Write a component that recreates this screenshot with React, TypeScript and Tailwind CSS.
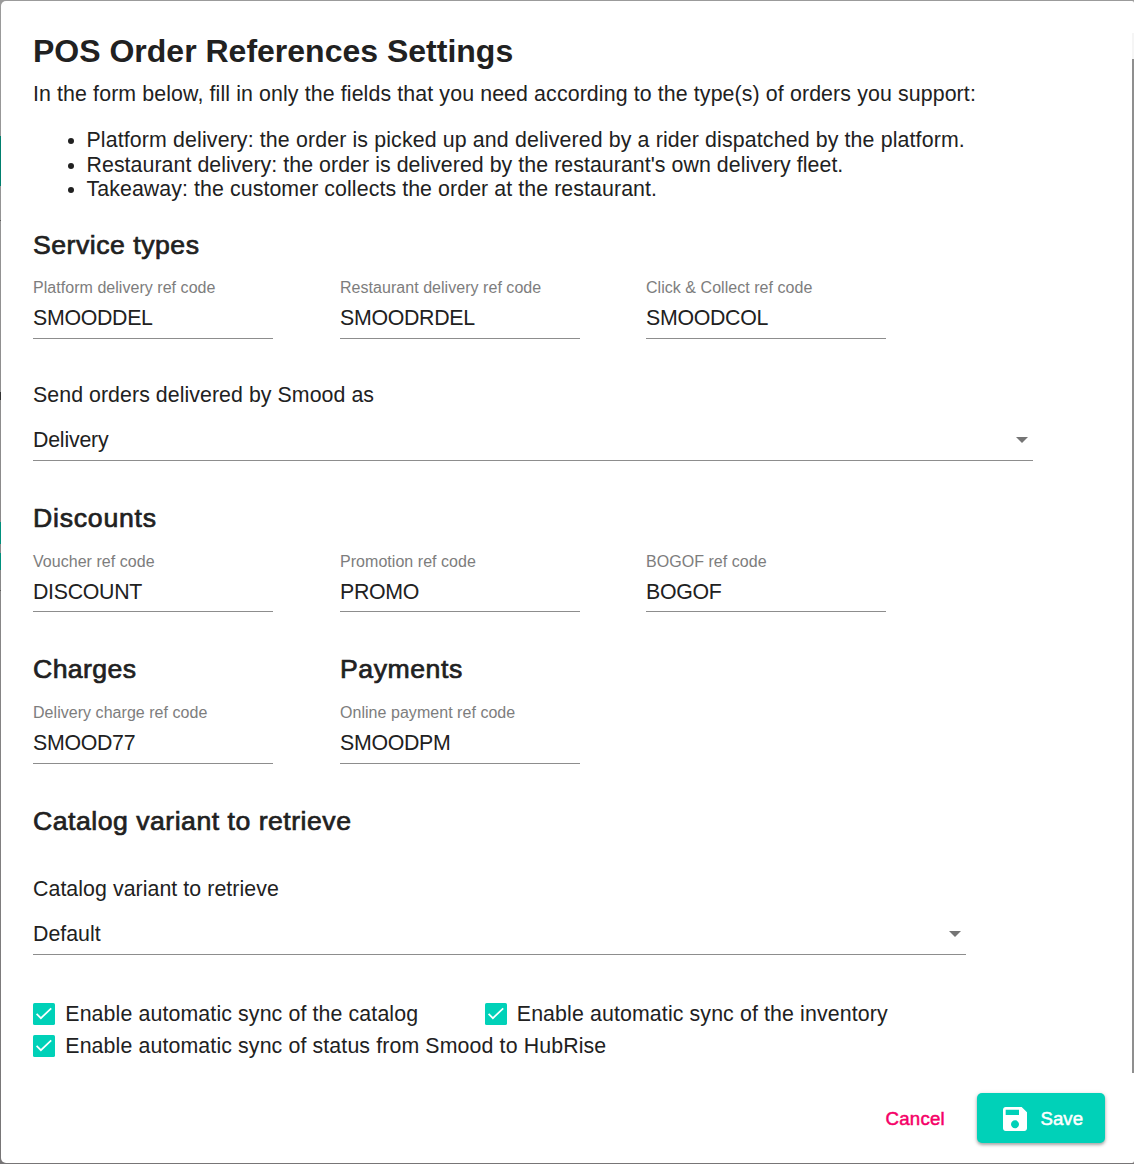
import type { ReactNode } from 'react'

function Heading({ className = '', children }: { className?: string; children: ReactNode }) {
  return (
    <h2
      className={`whitespace-nowrap text-[26.67px] leading-8 font-normal [-webkit-text-stroke:0.7px_#212121] ${className}`}
    >
      {children}
    </h2>
  )
}

function Field({ label, value, tight = false }: { label: string; value: string; tight?: boolean }) {
  return (
    <label className={`flex w-60 flex-col border-b border-[#8d8d8d] ${tight ? 'pb-[5px]' : 'pb-1.5'}`}>
      <span className="pt-px whitespace-nowrap text-base leading-5 tracking-[0.04px] text-[#7d7d7d]">{label}</span>
      <span className="mt-1.5 text-[21.33px] leading-7 tracking-[-0.3px]">{value}</span>
    </label>
  )
}

function Select({ label, value, className, tracking }: { label: string; value: string; className: string; tracking: string }) {
  return (
    <div className={className}>
      <div className="text-[21.33px] leading-7 tracking-[0.06px]">{label}</div>
      <div className="mt-[17px] flex items-center justify-between border-b border-[#8d8d8d] pb-1.5">
        <span className={`text-[21.33px] leading-7 ${tracking}`}>{value}</span>
        <svg className="mr-[5px] h-1.5 w-3" viewBox="0 0 12 6" fill="#757575">
          <path d="M0 0h12L6 6z" />
        </svg>
      </div>
    </div>
  )
}

function Check({ children }: { children: ReactNode }) {
  return (
    <label className="flex items-center">
      <svg className="h-[22px] w-[22px]" viewBox="0 0 22 22">
        <rect width="22" height="22" rx="1.6" fill="#00d1b8" />
        <path d="M3.6 10.9L7.9 15.2L18.2 5.4" fill="none" stroke="#fff" strokeWidth="1.7" />
      </svg>
      <span className="pl-[10.3px] whitespace-nowrap text-[21.33px] leading-8 tracking-[0.12px]">{children}</span>
    </label>
  )
}

export default function App() {
  return (
    <div className="flex h-[1164px] w-[1134px] overflow-hidden bg-linear-to-b from-[#9b9b9b] to-[#777576] font-['Liberation_Sans',Arial,sans-serif] text-[#212121]">
      <div className="flex w-px shrink-0 flex-col">
        <div className="mt-[136px] h-[50px] bg-[#007f6e]" />
        <div className="mt-[34px] h-px bg-[#5a5a5a]" />
        <div className="mt-[171px] h-2 bg-[#333]" />
        <div className="mt-[122px] h-[22px] bg-[#00907d]" />
        <div className="mt-[9px] h-[17px] bg-[#00907d]" />
        <div className="mt-5 h-px bg-[#5a5a5a]" />
      </div>
      <main className="mt-px mb-px flex flex-1 flex-col rounded-l-[5px] rounded-r-[2px] bg-white">
        <div className="flex h-[1072px]">
          <div className="flex-1 pt-[30px] pl-8">
            <h1 className="text-[32px] leading-10 font-bold">POS Order References Settings</h1>
            <p className="mt-[9px] whitespace-nowrap text-[21.33px] leading-7 tracking-[0.118px]">
              In the form below, fill in only the fields that you need according to the type(s) of orders you support:
            </p>
            <ul className="mt-5 list-disc pl-[53.5px] text-[21.33px] leading-[24.5px] whitespace-nowrap">
              <li className="tracking-[0.138px]">
                Platform delivery: the order is picked up and delivered by a rider dispatched by the platform.
              </li>
              <li className="tracking-[0.057px]">
                Restaurant delivery: the order is delivered by the restaurant's own delivery fleet.
              </li>
              <li className="tracking-[0.085px]">Takeaway: the customer collects the order at the restaurant.</li>
            </ul>

            <Heading className="mt-[27.5px] tracking-[0.5px]">Service types</Heading>
            <div className="mt-4 grid grid-cols-[307px_306px_240px]">
              <Field label="Platform delivery ref code" value="SMOODDEL" />
              <Field label="Restaurant delivery ref code" value="SMOODRDEL" />
              <Field label="Click & Collect ref code" value="SMOODCOL" />
            </div>
            <Select
              className="mt-[42px] w-[1000px]"
              label="Send orders delivered by Smood as"
              value="Delivery"
              tracking="tracking-[-0.2px]"
            />

            <Heading className="mt-[41px] tracking-[0.75px]">Discounts</Heading>
            <div className="mt-[17px] grid grid-cols-[307px_306px_240px]">
              <Field tight label="Voucher ref code" value="DISCOUNT" />
              <Field tight label="Promotion ref code" value="PROMO" />
              <Field tight label="BOGOF ref code" value="BOGOF" />
            </div>

            <div className="mt-[41px] grid grid-cols-[307px_306px]">
              <section>
                <Heading className="mb-[17px] tracking-[0.38px]">Charges</Heading>
                <Field label="Delivery charge ref code" value="SMOOD77" />
              </section>
              <section>
                <Heading className="mb-[17px] tracking-[0.53px]">Payments</Heading>
                <Field label="Online payment ref code" value="SMOODPM" />
              </section>
            </div>

            <Heading className="mt-[41px] tracking-[0.49px]">Catalog variant to retrieve</Heading>
            <Select
              className="mt-[38px] w-[933px]"
              label="Catalog variant to retrieve"
              value="Default"
              tracking="tracking-[0px]"
            />

            <div className="mt-[43px] flex">
              <div className="w-[451.5px]">
                <Check>Enable automatic sync of the catalog</Check>
              </div>
              <Check>Enable automatic sync of the inventory</Check>
            </div>
            <Check>Enable automatic sync of status from Smood to HubRise</Check>
          </div>
          <div className="mt-8 w-0.5 bg-[#f5f5f5] pt-[26px]">
            <div className="h-full bg-[#8f8f8f]" />
          </div>
        </div>
        <footer className="flex items-start justify-end pt-5 pr-[29px]">
          <button className="mr-8 h-[50px] pt-0.5 text-[18.67px] tracking-[0.25px] text-[#f50067] [-webkit-text-stroke:0.5px_#f50067]">
            Cancel
          </button>
          <button className="flex h-[50px] w-32 items-center rounded-[5px] bg-[#00d1b8] pt-0.5 pl-[21.5px] text-[18.67px] text-white shadow-[0_2px_3px_rgba(0,0,0,0.26),0_1px_5px_rgba(0,0,0,0.16)]">
            <svg className="h-8 w-8" viewBox="0 0 24 24" fill="currentColor">
              <path d="M17 3H5c-1.11 0-2 .9-2 2v14c0 1.1.89 2 2 2h14c1.1 0 2-.9 2-2V7l-4-4zm-5 16c-1.66 0-3-1.34-3-3s1.34-3 3-3 3 1.34 3 3-1.34 3-3 3zm3-10H5V5h10v4z" />
            </svg>
            <span className="ml-2.5 [-webkit-text-stroke:0.5px_#fff]">Save</span>
          </button>
        </footer>
      </main>
    </div>
  )
}
